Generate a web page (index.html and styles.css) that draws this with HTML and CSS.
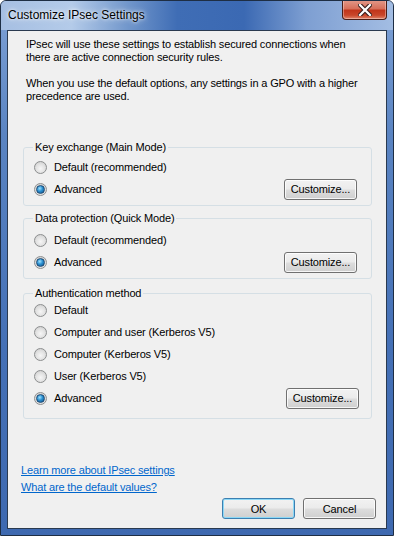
FILE: index.html
```html
<!DOCTYPE html>
<html lang="en">
<head>
    <meta charset="UTF-8">
    <meta name="viewport" content="width=device-width, initial-scale=1.0">
    <title>Customize IPsec Settings</title>
    <link rel="stylesheet" href="styles.css">
</head>
<body>
    <div class="window">
        <div class="titlebar">
            <span class="title">Customize IPsec Settings</span>
            <div class="close">
                <svg width="14" height="12" viewBox="0 0 14 12">
                    <path d="M2 1 L12 11 M12 1 L2 11" stroke="#3b2220" stroke-width="4.4" stroke-linecap="square"/>
                    <path d="M2 1 L12 11 M12 1 L2 11" stroke="#ffffff" stroke-width="2.2" stroke-linecap="square"/>
                </svg>
            </div>
        </div>

        <div class="client">
            <div class="intro">
                <p>IPsec will use these settings to establish secured connections when there are active connection security rules.</p>
                <p>When you use the default options, any settings in a GPO with a higher precedence are used.</p>
            </div>

            <fieldset class="group group-main">
                <legend>Key exchange (Main Mode)</legend>
                <div class="row"><span class="radio"></span>Default (recommended)</div>
                <div class="row"><span class="radio checked"></span>Advanced<button class="btn">Customize...</button></div>
            </fieldset>

            <fieldset class="group group-quick">
                <legend>Data protection (Quick Mode)</legend>
                <div class="row"><span class="radio"></span>Default (recommended)</div>
                <div class="row"><span class="radio checked"></span>Advanced<button class="btn">Customize...</button></div>
            </fieldset>

            <fieldset class="group group-auth">
                <legend>Authentication method</legend>
                <div class="row"><span class="radio"></span>Default</div>
                <div class="row"><span class="radio"></span>Computer and user (Kerberos V5)</div>
                <div class="row"><span class="radio"></span>Computer (Kerberos V5)</div>
                <div class="row"><span class="radio"></span>User (Kerberos V5)</div>
                <div class="row"><span class="radio checked"></span>Advanced<button class="btn">Customize...</button></div>
            </fieldset>

            <div class="footer">
                <div class="links">
                    <a href="#">Learn more about IPsec settings</a>
                    <a href="#">What are the default values?</a>
                </div>
                <div class="actions">
                    <button class="btn btn-default">OK</button>
                    <button class="btn">Cancel</button>
                </div>
            </div>
        </div>
    </div>
</body>
</html>
```

FILE: styles.css
```css
* {
    margin: 0;
    padding: 0;
    box-sizing: border-box;
}

body {
    font-family: 'Liberation Sans', Arial, sans-serif;
    font-size: 11px;
    letter-spacing: -0.15px;
    color: #000;
    background: #fff;
}

.window {
    width: 394px;
    height: 536px;
    border: 1px solid #1e2e44;
    border-radius: 6px 6px 0 0;
    background: linear-gradient(180deg, #7fa2d6 0%, #5a84c2 25%, #4470b6 65%, #3e69b0 100%);
    padding: 0 6px 6px 6px;
    display: flex;
    flex-direction: column;
    overflow: hidden;
}

.titlebar {
    height: 29px;
    margin: 0 -6px;
    padding: 0 6px 0 7px;
    display: flex;
    justify-content: space-between;
    background: linear-gradient(90deg, #a6bfe2 0%, #b4cbe9 18%, #7398cc 32%, #3f6db5 45%, #3b69b3 62%, #7e9fd2 78%, #a3bde3 100%);
}

.title {
    font-size: 12px;
    letter-spacing: 0;
    color: #000;
    line-height: 29px;
    text-shadow: 0 0 6px rgba(255, 255, 255, 0.9), 0 0 3px rgba(255, 255, 255, 0.9);
}

.close {
    width: 45px;
    height: 20px;
    margin-top: -1px;
    border: 1px solid #4a1d16;
    border-top: none;
    border-radius: 0 0 4px 4px;
    background: linear-gradient(180deg, #e39a8a 0%, #d7705b 45%, #c1351b 55%, #c9462a 80%, #e0846a 100%);
    box-shadow: inset 0 0 0 1px rgba(255, 255, 255, 0.35);
    display: flex;
    align-items: center;
    justify-content: center;
}

.client {
    flex: 1;
    background: #f0f0f0;
    border: 1px solid #2a3a50;
    padding: 7px 14px 9px 15px;
    display: flex;
    flex-direction: column;
}

.intro {
    padding-left: 3px;
    line-height: 13px;
}

.intro p + p {
    margin-top: 13px;
}

.group {
    border: 1px solid #d5dfe5;
    border-radius: 3px;
    padding: 2px 14px 5px 5px;
}

.group legend {
    padding: 0 2px;
    margin-left: 4px;
    line-height: 13px;
}

.group-main {
    margin-top: 38px;
}

.group-quick {
    margin-top: 6px;
    padding-top: 4px;
}

.group-auth {
    margin-top: 8px;
    padding: 0 14px 9px 5px;
}

.group-auth .row:first-of-type {
    margin-top: -1px;
}

.group-auth .btn {
    margin-right: -2px;
}

.row {
    height: 22px;
    display: flex;
    align-items: center;
    white-space: nowrap;
}

.radio {
    width: 13px;
    height: 13px;
    border-radius: 50%;
    border: 1px solid #8c8e8f;
    background: radial-gradient(circle at 50% 60%, #f6f6f6 0%, #e2e2e2 50%, #c8c8c8 100%);
    margin: 0 7px 0 5px;
    display: flex;
    align-items: center;
    justify-content: center;
    flex-shrink: 0;
}

.radio.checked::after {
    content: "";
    width: 7px;
    height: 7px;
    border-radius: 50%;
    background: radial-gradient(circle at 40% 35%, #9fe2ff 0%, #2a8fd0 45%, #0f4f86 100%);
    border: 1px solid #1d4a74;
}

.btn {
    font-family: 'Liberation Sans', Arial, sans-serif;
    font-size: 11px;
    letter-spacing: -0.15px;
    color: #000;
    width: 73px;
    height: 21px;
    border: 1px solid #707070;
    border-radius: 3px;
    background: linear-gradient(180deg, #f2f2f2 0%, #ebebeb 48%, #dddddd 52%, #cfcfcf 100%);
    box-shadow: inset 0 0 0 1px rgba(255, 255, 255, 0.8);
}

.row .btn {
    margin-left: auto;
}

.footer {
    margin-top: auto;
}

.links {
    display: flex;
    flex-direction: column;
    align-items: flex-start;
    gap: 4px;
    margin-left: -2px;
    line-height: 13px;
}

.links a {
    color: #0066cc;
}

.actions {
    display: flex;
    justify-content: flex-end;
    gap: 8px;
    margin-top: 4px;
    margin-right: -4px;
}

.btn-default {
    border-color: #3c7fb1;
    box-shadow: inset 0 0 0 1px #8cd8f6;
}
```
